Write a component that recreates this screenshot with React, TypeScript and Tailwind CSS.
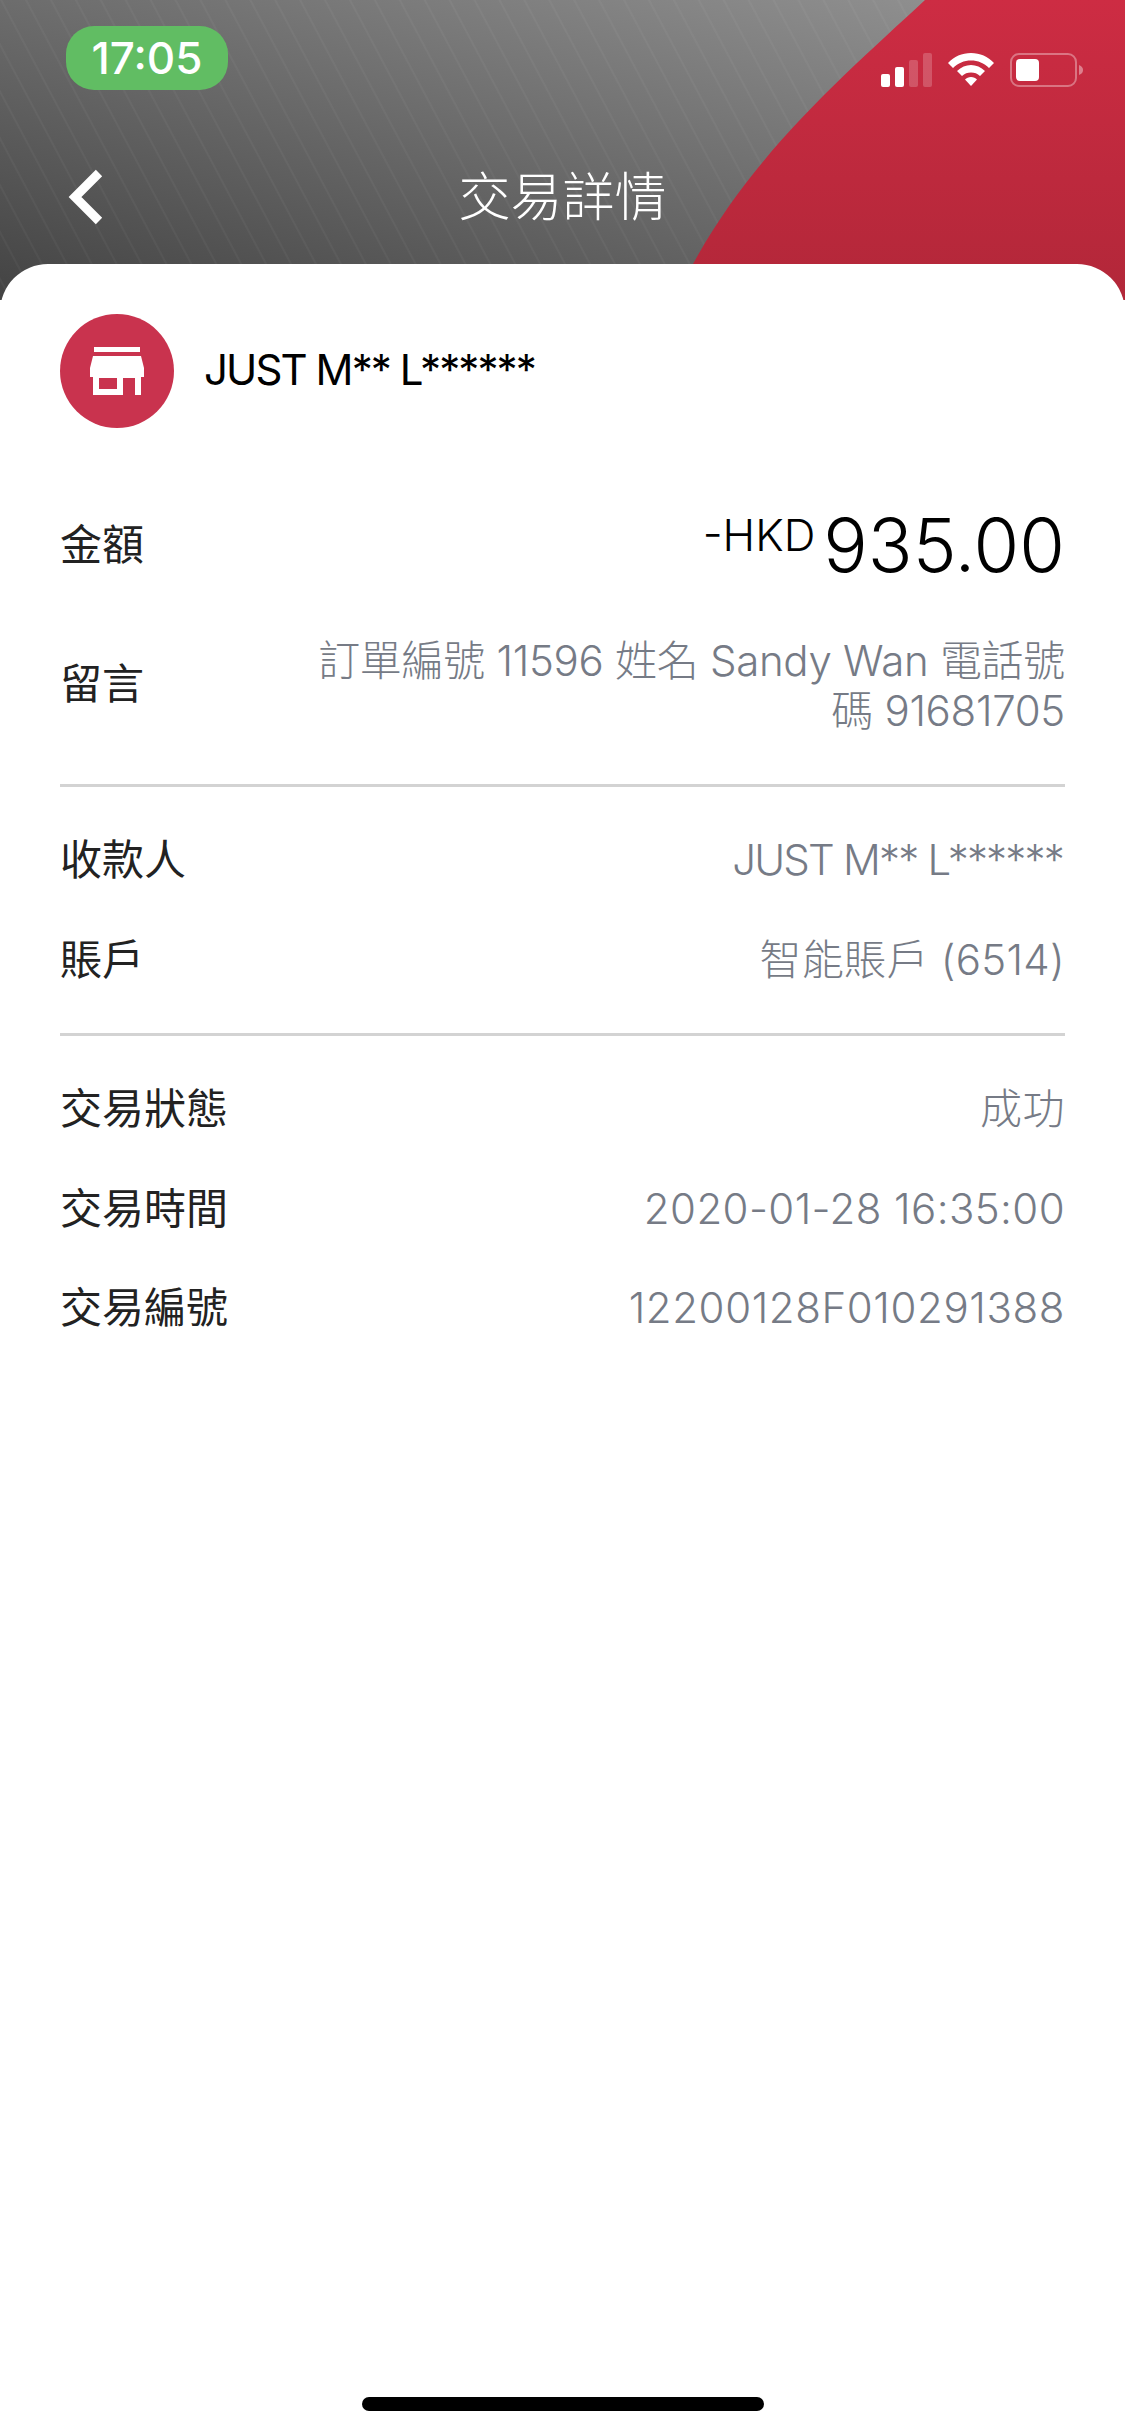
const font = { fontFamily: 'Inter, "Noto Sans CJK TC", sans-serif' }

const rows1 = [
    { label: '收款人', value: 'JUST M** L******', tracking: 'pr-[2px] tracking-[-1.800px]' },
    { label: '賬戶', value: '智能賬戶 (6514)', tracking: 'tracking-[0.300px]' },
]

const rows2 = [
    { label: '交易狀態', value: '成功', tracking: 'tracking-[0.500px]' },
    { label: '交易時間', value: '2020-01-28 16:35:00', tracking: 'tracking-[0.400px]' },
    { label: '交易編號', value: '12200128F010291388', tracking: 'tracking-[0.600px]' },
]

const HeaderBg = () => (
    <svg className="absolute inset-0" width="1125" height="300" viewBox="0 0 1125 300">
        <defs>
            <linearGradient id="gray" x1="0" y1="1" x2="1" y2="0">
                <stop offset="0" stopColor="#434343" />
                <stop offset="1" stopColor="#969696" />
            </linearGradient>
            <linearGradient id="red" x1="0" y1="0" x2="0" y2="1">
                <stop offset="0" stopColor="#cd2c43" />
                <stop offset="1" stopColor="#b22739" />
            </linearGradient>
            <pattern id="stripes" width="22" height="22" patternUnits="userSpaceOnUse" patternTransform="rotate(-28)">
                <rect width="2" height="22" fill="#ffffff" opacity="0.035" />
            </pattern>
        </defs>
        <rect width="1125" height="300" fill="url(#gray)" />
        <rect width="1125" height="300" fill="url(#stripes)" />
        <path d="M925 0 C 850 70 755 150 693 264 L673 300 L1125 300 L1125 0 Z" fill="url(#red)" />
    </svg>
)

const StatusIcons = () => (
    <div className="flex items-center">
        <svg width="54" height="34" viewBox="0 0 54 34" fill="#fff">
            <rect x="0" y="21" width="9" height="13" rx="2" />
            <rect x="14" y="14" width="9" height="20" rx="2" />
            <rect x="28" y="7" width="9" height="27" rx="2" opacity="0.2" />
            <rect x="42" y="0" width="9" height="34" rx="2" opacity="0.2" />
        </svg>
        <svg className="ml-[13px]" width="46" height="34" viewBox="0 0 46 34" fill="#fff">
            <path d="M23 0 C32 0 40 3.500 46 10 L41 15 C36 10 30 7.500 23 7.500 C16 7.500 10 10 5 15 L0 10 C6 3.500 14 0 23 0 Z" />
            <path d="M23 12 C28 12 33 14 37 18 L32 23 C29.500 20.500 26.500 19.500 23 19.500 C19.500 19.500 16.500 20.500 14 23 L9 18 C13 14 18 12 23 12 Z" />
            <path d="M23 24 C25.500 24 27.500 25 29 26.500 L23 33 L17 26.500 C18.500 25 20.500 24 23 24 Z" />
        </svg>
        <svg className="ml-[16px]" width="74" height="34" viewBox="0 0 74 34">
            <rect x="1" y="1" width="65" height="32" rx="8" fill="none" stroke="#fff" strokeOpacity="0.35" strokeWidth="2" />
            <rect x="6" y="6" width="23" height="22" rx="4" fill="#fff" />
            <path d="M69 12 C72 13 73 15 73 17 C73 19 72 21 69 22 Z" fill="#fff" fillOpacity="0.4" />
        </svg>
    </div>
)

const Row = ({ label, value, tracking }: { label: string; value: string; tracking: string }) => (
    <div className="flex h-[99.500px] items-center justify-between">
        <span className="text-[42px] text-[#222222]">{label}</span>
        <span className={`text-[42px] font-light text-[#767b86] ${tracking}`}>{value}</span>
    </div>
)

export default function App() {
    return (
        <div className="relative h-[2436px] w-[1125px] overflow-hidden bg-white" style={font}>
            <HeaderBg />

            <header className="relative h-[264px]">
                <div className="flex items-start justify-between pl-[66px] pr-[41px] pt-[26px]">
                    <div className="flex h-[64px] w-[162px] items-center justify-center rounded-[28px] bg-[#61bd63] text-[44px] font-medium text-white">
                        17:05
                    </div>
                    <div className="pt-[27px]">
                        <StatusIcons />
                    </div>
                </div>
                <div className="relative mt-[78px] flex items-center justify-center">
                    <svg className="absolute left-[68px] top-[1px]" width="36" height="56" viewBox="0 0 36 56" fill="none">
                        <path d="M31 4 L7 28 L31 52" stroke="#fff" strokeWidth="9" />
                    </svg>
                    <h1 className="text-[52px] font-light leading-[60px] text-white">交易詳情</h1>
                </div>
            </header>

            <main className="relative rounded-t-[48px] bg-white px-[60px] pt-[50px]">
                <div className="flex items-center">
                    <div className="flex h-[114px] w-[114px] items-center justify-center rounded-full bg-[#c9334e]">
                        <svg width="54" height="48" viewBox="0 0 54 48" fill="#fff">
                            <rect x="4" y="0" width="46" height="5" />
                            <path d="M3 9 H51 L54 21 V30 H0 V21 Z" />
                            <path fillRule="evenodd" d="M3 30 H51 V48 H45 V31 H33 V48 H3 Z M9 31 V42 H27 V31 Z" />
                        </svg>
                    </div>
                    <span className="ml-[30px] pb-[4px] text-[42px] tracking-[-1.900px] text-black">JUST M** L******</span>
                </div>

                <div className="mt-[58px] flex h-[118px] items-center justify-between">
                    <span className="pb-[2px] text-[42px] text-[#222222]">金額</span>
                    <div className="flex items-start text-black">
                        <span className="mt-[6px] text-[44px] font-light leading-[48px]">-HKD</span>
                        <span className="ml-[8px] text-[74px] font-light leading-[80px]">935.00</span>
                    </div>
                </div>

                <div className="mt-[32px] flex items-center justify-between">
                    <span className="pb-[5px] text-[42px] text-[#222222]">留言</span>
                    <p className="w-[760px] text-right text-[42px] font-light leading-[50px] tracking-[-0.300px] text-[#767b86]">
                        訂單編號 11596 姓名 Sandy Wan 電話號碼 91681705
                    </p>
                </div>

                <div className="mt-[48px] h-[3px] bg-[#d3d3d3]" />

                <div className="pt-[23px]">
                    {rows1.map((row) => (
                        <Row key={row.label} {...row} />
                    ))}
                </div>

                <div className="mt-[24px] h-[3px] bg-[#d3d3d3]" />

                <div className="pt-[23px]">
                    {rows2.map((row) => (
                        <Row key={row.label} {...row} />
                    ))}
                </div>
            </main>

            <div className="absolute bottom-[25px] left-[362px] h-[14px] w-[402px] rounded-full bg-black" />
        </div>
    )
}
